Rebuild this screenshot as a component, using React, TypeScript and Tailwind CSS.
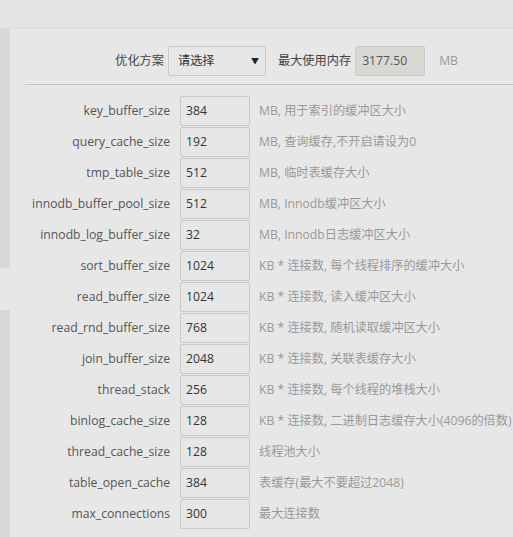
import React from "react";

const rows: [string, string, string][] = [
  ["key_buffer_size", "384", "MB, 用于索引的缓冲区大小"],
  ["query_cache_size", "192", "MB, 查询缓存,不开启请设为0"],
  ["tmp_table_size", "512", "MB, 临时表缓存大小"],
  ["innodb_buffer_pool_size", "512", "MB, Innodb缓冲区大小"],
  ["innodb_log_buffer_size", "32", "MB, Innodb日志缓冲区大小"],
  ["sort_buffer_size", "1024", "KB * 连接数, 每个线程排序的缓冲大小"],
  ["read_buffer_size", "1024", "KB * 连接数, 读入缓冲区大小"],
  ["read_rnd_buffer_size", "768", "KB * 连接数, 随机读取缓冲区大小"],
  ["join_buffer_size", "2048", "KB * 连接数, 关联表缓存大小"],
  ["thread_stack", "256", "KB * 连接数, 每个线程的堆栈大小"],
  ["binlog_cache_size", "128", "KB * 连接数, 二进制日志缓存大小(4096的倍数)"],
  ["thread_cache_size", "128", "线程池大小"],
  ["table_open_cache", "384", "表缓存(最大不要超过2048)"],
  ["max_connections", "300", "最大连接数"],
];

export default function App() {
  return (
    <div
      className="w-[513px] h-[537px] overflow-hidden bg-[#e4e4e4] text-[12.2px] text-[#555]"
      style={{ fontFamily: '"Open Sans", "Noto Sans CJK SC", sans-serif' }}
    >
      <div className="h-[29px] border-b border-[#dadada]"></div>
      <div className="flex">
        {/* 左侧栏 */}
        <div className="w-[10px] flex flex-col shrink-0">
          <div className="h-[239px] bg-[#d7d7d7]"></div>
          <div className="h-[42px] bg-[#e7e7e7]"></div>
          <div className="h-[300px] bg-[#d7d7d7]"></div>
        </div>
        <section className="flex-1 bg-[#e7e7e7] pt-[17px]">
          <div className="flex items-center h-[30px]">
            <span className="w-[158px] text-right pr-[4px] text-[#444]">优化方案</span>
            <div className="w-[98px] h-[30px] border border-[#c8c8c8] rounded-[2px] flex items-center justify-between pl-[9px] pr-[6px] text-[#333]">
              <span>请选择</span>
              <span className="text-[8px] text-[#222]">▼</span>
            </div>
            <span className="ml-[12px] text-[#444]">最大使用内存</span>
            <div className="ml-[4px] w-[70px] h-[30px] border border-[#c8c8c8] rounded-[2px] bg-[#d9d9d4] flex items-center px-[6px] text-[#555]">
              3177.50
            </div>
            <span className="ml-[14px] text-[#999]">MB</span>
          </div>
          <hr className="ml-[15px] mt-[8px] border-t border-[#c4c4c4]" />
          <div className="mt-[11px] flex flex-col gap-[1px]">
            {rows.map(([name, val, desc]) => (
              <div key={name} className="flex items-center h-[30px]">
                <span className="w-[160px] text-right text-[#555]">{name}</span>
                <div className="ml-[10px] w-[70px] h-[30px] border border-[#c8c8c8] rounded-[2px] flex items-center px-[5px] text-[#333]">
                  {val}
                </div>
                <span className="ml-[9px] whitespace-nowrap text-[#999]">{desc}</span>
              </div>
            ))}
          </div>
        </section>
      </div>
    </div>
  );
}
